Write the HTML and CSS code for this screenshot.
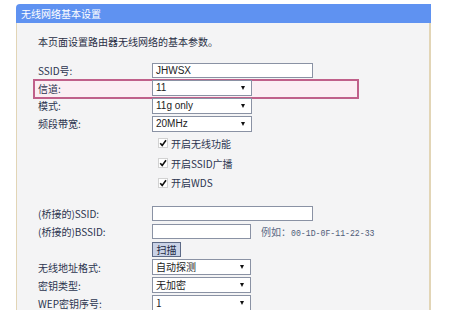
FILE: index.html
```html
<!DOCTYPE html>
<html lang="zh-CN">
<head>
<meta charset="utf-8">
<title>无线网络基本设置</title>
<link rel="stylesheet" href="styles.css">
</head>
<body>
<div class="panel">
  <div class="panel-head">无线网络基本设置</div>
  <div class="panel-body">
    <p class="intro">本页面设置路由器无线网络的基本参数。</p>
    <div class="form">
      <div class="row"><span class="label">SSID号:</span><span class="input input-wide">JHWSX</span></div>
      <div class="row row-hl"><span class="hl"></span><span class="label">信道:</span><span class="select">11<i class="arrow"></i></span></div>
      <div class="row row-17"><span class="label">模式:</span><span class="select">11g only<i class="arrow"></i></span></div>
      <div class="row row-19"><span class="label">频段带宽:</span><span class="select">20MHz<i class="arrow"></i></span></div>
      <div class="row row-cb"><span class="label"></span><span class="check"><svg class="cb" viewBox="0 0 10 10" width="10" height="10"><rect x="0.5" y="0.5" width="9" height="9" fill="#fff" stroke="#d2d2d2"/><path d="M2.2 5.2 L4.2 7.4 L8 2.2" fill="none" stroke="#111" stroke-width="1.6"/></svg>开启无线功能</span></div>
      <div class="row row-cb"><span class="label"></span><span class="check"><svg class="cb" viewBox="0 0 10 10" width="10" height="10"><rect x="0.5" y="0.5" width="9" height="9" fill="#fff" stroke="#d2d2d2"/><path d="M2.2 5.2 L4.2 7.4 L8 2.2" fill="none" stroke="#111" stroke-width="1.6"/></svg>开启SSID广播</span></div>
      <div class="row row-19"><span class="label"></span><span class="check"><svg class="cb" viewBox="0 0 10 10" width="10" height="10"><rect x="0.5" y="0.5" width="9" height="9" fill="#fff" stroke="#d2d2d2"/><path d="M2.2 5.2 L4.2 7.4 L8 2.2" fill="none" stroke="#111" stroke-width="1.6"/></svg>开启WDS</span></div>
    </div>
    <div class="form form-wds">
      <div class="row"><span class="label">(桥接的)SSID:</span><span class="input input-wide"></span></div>
      <div class="row row-19"><span class="label">(桥接的)BSSID:</span><span class="input input-mid"></span><span class="example">例如：<span class="mono">00-1D-0F-11-22-33</span></span></div>
      <div class="row row-17"><span class="label"></span><span class="btn">扫描</span></div>
      <div class="row"><span class="label">无线地址格式:</span><span class="select select-cjk">自动探测<i class="arrow"></i></span></div>
      <div class="row"><span class="label">密钥类型:</span><span class="select select-cjk">无加密<i class="arrow"></i></span></div>
      <div class="row"><span class="label">WEP密钥序号:</span><span class="select select-cjk">1<i class="arrow"></i></span></div>
    </div>
  </div>
</div>
</body>
</html>
```

FILE: styles.css
```css
html, body {
  margin: 0;
  padding: 0;
  background: #ffffff;
}
body {
  width: 453px;
  height: 310px;
  overflow: hidden;
  font-family: "Noto Sans CJK SC", "Noto Sans", sans-serif;
  font-size: 10px;
  color: #2c3450;
}
.panel {
  margin: 4px 0 0 16px;
  width: 415px;
}
.panel-head {
  height: 19px;
  line-height: 19px;
  background: #5f92f1;
  color: #ffffff;
  padding-left: 5px;
  border-top-left-radius: 4px;
  font-size: 10px;
}
.panel-body {
  background: #f4f4f5;
  border-left: 1px solid #e2d5b6;
  border-right: 2px solid #e2d5b6;
  padding: 12px 0 0 21px;
  height: 320px;
  box-sizing: border-box;
}
.intro {
  margin: 0;
  height: 14px;
  line-height: 14px;
  color: #2a2f45;
}
.form {
  margin-top: 12px;
}
.form-wds {
  margin-top: 12px;
}
.row {
  position: relative;
  display: flex;
  align-items: center;
  height: 18px;
}
.row-17 { height: 17px; }
.row-19 { height: 19px; }
.row-cb { height: 20px; }
.label {
  width: 114px;
  flex: none;
  white-space: nowrap;
  position: relative;
  z-index: 1;
}
.input {
  position: relative;
  z-index: 1;
  box-sizing: border-box;
  height: 15px;
  background: #ffffff;
  border: 1px solid #8a92a4;
  font-family: "Liberation Sans", Arial, sans-serif;
  font-size: 10px;
  line-height: 13px;
  padding-left: 3px;
  color: #222;
}
.input-wide { width: 161px; }
.input-mid { width: 99px; }
.select {
  position: relative;
  z-index: 1;
  box-sizing: border-box;
  width: 100px;
  height: 16px;
  background: #ffffff;
  border: 1px solid #8a92a4;
  font-family: "Liberation Sans", Arial, sans-serif;
  font-size: 10px;
  line-height: 14px;
  padding-left: 3px;
  color: #222;
}
.select-cjk {
  font-family: "Noto Sans CJK SC", sans-serif;
  font-size: 10px;
  width: 99px;
}
.arrow {
  position: absolute;
  right: 6px;
  top: 5px;
  width: 0;
  height: 0;
  border-left: 2.5px solid transparent;
  border-right: 2.5px solid transparent;
  border-top: 4px solid #111;
}
.row-hl .hl {
  position: absolute;
  left: -5px;
  top: 0;
  width: 326px;
  height: 20px;
  box-sizing: border-box;
  border: 2px solid #c0608a;
  background: #fbeef3;
  z-index: 0;
}
.check {
  display: flex;
  align-items: center;
  padding-left: 6px;
  gap: 3px;
  color: #2c3450;
}
.cb {
  display: block;
}
.example {
  margin-left: 10px;
  color: #5e6b85;
  white-space: nowrap;
}
.mono {
  font-family: "Liberation Mono", monospace;
  font-size: 8.2px;
  color: #4f5c78;
}
.btn {
  box-sizing: border-box;
  width: 29px;
  height: 15px;
  line-height: 13px;
  text-align: center;
  background: #c9d2e6;
  border: 1px solid #5d6a86;
  color: #1f2a44;
  font-size: 10px;
}
```
